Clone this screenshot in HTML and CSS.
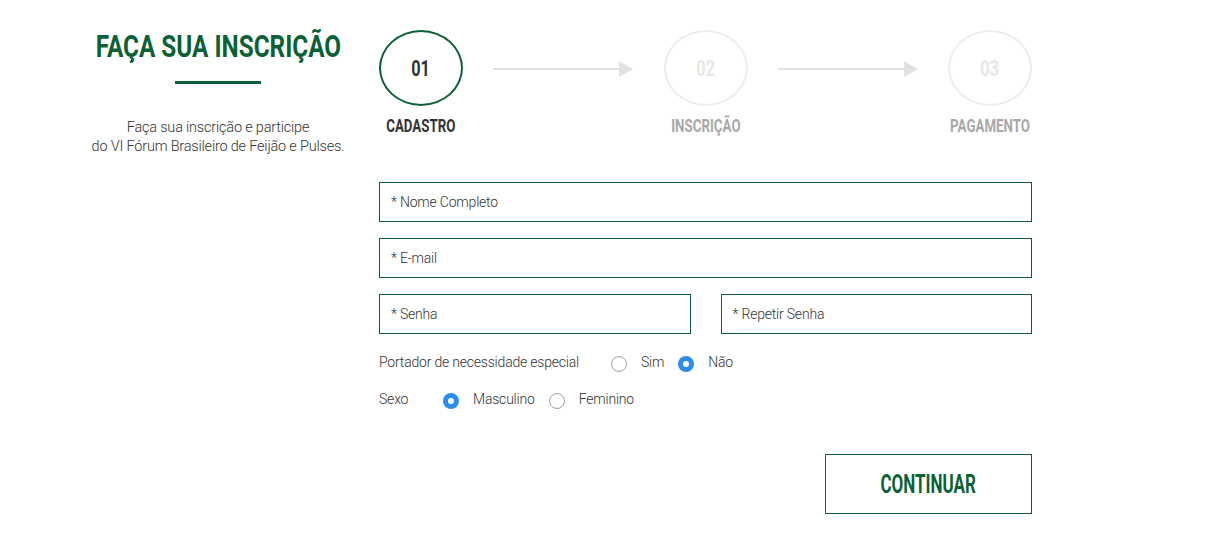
FILE: index.html
```html
<!DOCTYPE html>
<html lang="pt-BR">
<head>
<meta charset="utf-8">
<title>Faça sua inscrição</title>
<link rel="stylesheet" href="styles.css">
</head>
<body>
<div class="page">
  <aside class="intro">
    <h1 class="intro-title"><span class="cond">FAÇA SUA INSCRIÇÃO</span></h1>
    <div class="intro-bar"></div>
    <p class="intro-text">Faça sua inscrição e participe<br>do VI Fórum Brasileiro de Feijão e Pulses.</p>
  </aside>
  <main class="main">
    <div class="steps">
      <div class="step active">
        <div class="step-circle"><span class="cond">01</span></div>
        <div class="step-label"><span class="cond">CADASTRO</span></div>
      </div>
      <div class="arrow"><span class="arrow-line"></span><span class="arrow-head"></span></div>
      <div class="step">
        <div class="step-circle"><span class="cond">02</span></div>
        <div class="step-label"><span class="cond">INSCRIÇÃO</span></div>
      </div>
      <div class="arrow"><span class="arrow-line"></span><span class="arrow-head"></span></div>
      <div class="step">
        <div class="step-circle"><span class="cond">03</span></div>
        <div class="step-label"><span class="cond">PAGAMENTO</span></div>
      </div>
    </div>
    <form class="form">
      <div class="field">* Nome Completo</div>
      <div class="field">* E-mail</div>
      <div class="row-2">
        <div class="field">* Senha</div>
        <div class="field">* Repetir Senha</div>
      </div>
      <div class="radio-row">
        <span class="radio-q q-wide">Portador de necessidade especial</span>
        <span class="radio"></span><span class="radio-label">Sim</span>
        <span class="radio checked"></span><span class="radio-label">Não</span>
      </div>
      <div class="radio-row row-sexo">
        <span class="radio-q q-short">Sexo</span>
        <span class="radio checked"></span><span class="radio-label">Masculino</span>
        <span class="radio"></span><span class="radio-label">Feminino</span>
      </div>
      <div class="actions">
        <div class="btn"><span class="cond">CONTINUAR</span></div>
      </div>
    </form>
  </main>
</div>
</body>
</html>
```
FILE: styles.css
```css
* { box-sizing: border-box; }
html, body { margin: 0; padding: 0; background: #fff; }
body {
  font-family: "Roboto", "DejaVu Sans", sans-serif;
  color: #333;
}
.cond {
  display: inline-block;
  transform: scaleX(0.74);
  transform-origin: center;
  white-space: nowrap;
}
.page {
  display: flex;
  padding: 30px 0 0 80px;
  gap: 23px;
}
.intro {
  width: 276px;
  display: flex;
  flex-direction: column;
  align-items: center;
}
.intro-title {
  margin: 0;
  font-family: "Roboto", sans-serif;
  font-weight: 700;
  font-size: 32px;
  line-height: 33px;
  color: #0b6136;
  white-space: nowrap;
}
.intro-title .cond { transform: scaleX(0.76); }
.intro-bar {
  width: 86px;
  height: 3px;
  background: #0b6136;
  margin-top: 18px;
}
.intro-text {
  margin: 34px 0 0;
  font-family: "Roboto", sans-serif;
  font-weight: 300;
  font-size: 14.5px;
  line-height: 19px;
  text-align: center;
  color: #333;
  letter-spacing: -0.2px;
}
.main { width: 653px; }
.steps {
  display: flex;
  align-items: flex-start;
  justify-content: space-between;
}
.step {
  width: 84px;
  display: flex;
  flex-direction: column;
  align-items: center;
}
.step-circle {
  width: 84px;
  height: 76px;
  border: 2px solid #e8f0ec;
  border-radius: 50%;
  display: flex;
  align-items: center;
  justify-content: center;
  font-weight: 700;
  font-size: 22px;
  color: #e4e8e6;
}
.step-label {
  margin-top: 10px;
  font-weight: 700;
  font-size: 18px;
  line-height: 20px;
  color: #a8a8a8;
  white-space: nowrap;
}
.step.active .step-circle { border-color: #0b6136; color: #333; }
.step.active .step-label { color: #333; }
.arrow {
  width: 140px;
  height: 16px;
  margin-top: 31px;
  display: flex;
  align-items: center;
}
.arrow-line {
  flex: 1;
  height: 2px;
  background: #e2e2e2;
}
.arrow-head {
  width: 0; height: 0;
  border-top: 8px solid transparent;
  border-bottom: 8px solid transparent;
  border-left: 14px solid #e2e2e2;
}
.form {
  margin-top: 46px;
  display: flex;
  flex-direction: column;
  gap: 16px;
}
.field {
  height: 40px;
  border: 1px solid #0b6136;
  padding: 0 11px;
  display: flex;
  align-items: center;
  font-family: "Roboto", sans-serif;
  font-weight: 300;
  font-size: 14px;
  color: #333;
  letter-spacing: -0.2px;
}
.row-2 {
  display: flex;
  gap: 30px;
}
.row-2 .field { flex: 1; }
.radio-row {
  display: flex;
  align-items: center;
  font-family: "Roboto", sans-serif;
  font-weight: 300;
  font-size: 14px;
  color: #333;
  letter-spacing: -0.2px;
  height: 20px;
  margin-top: 2px;
}
.row-sexo { margin-top: 1px; }
.q-wide { width: 232px; }
.q-short { width: 64px; }
.radio {
  width: 16px;
  height: 16px;
  border-radius: 50%;
  border: 1px solid #a0a0a0;
  background: #fff;
  margin-top: 4px;
  flex-shrink: 0;
  display: flex;
  align-items: center;
  justify-content: center;
}
.radio.checked {
  border: none;
  background: #2d8cf0;
}
.radio.checked::after {
  content: "";
  width: 6px;
  height: 6px;
  border-radius: 50%;
  background: #fff;
}
.radio-label { margin: 0 14px; }
.radio-label:last-child { margin-right: 0; }
.actions {
  display: flex;
  justify-content: flex-end;
  margin-top: 29px;
}
.btn {
  width: 207px;
  height: 60px;
  border: 1px solid #0b6136;
  display: flex;
  align-items: center;
  justify-content: center;
  font-weight: 700;
  font-size: 25px;
  color: #0b6136;
}
.btn .cond { transform: scaleX(0.68); }
```
